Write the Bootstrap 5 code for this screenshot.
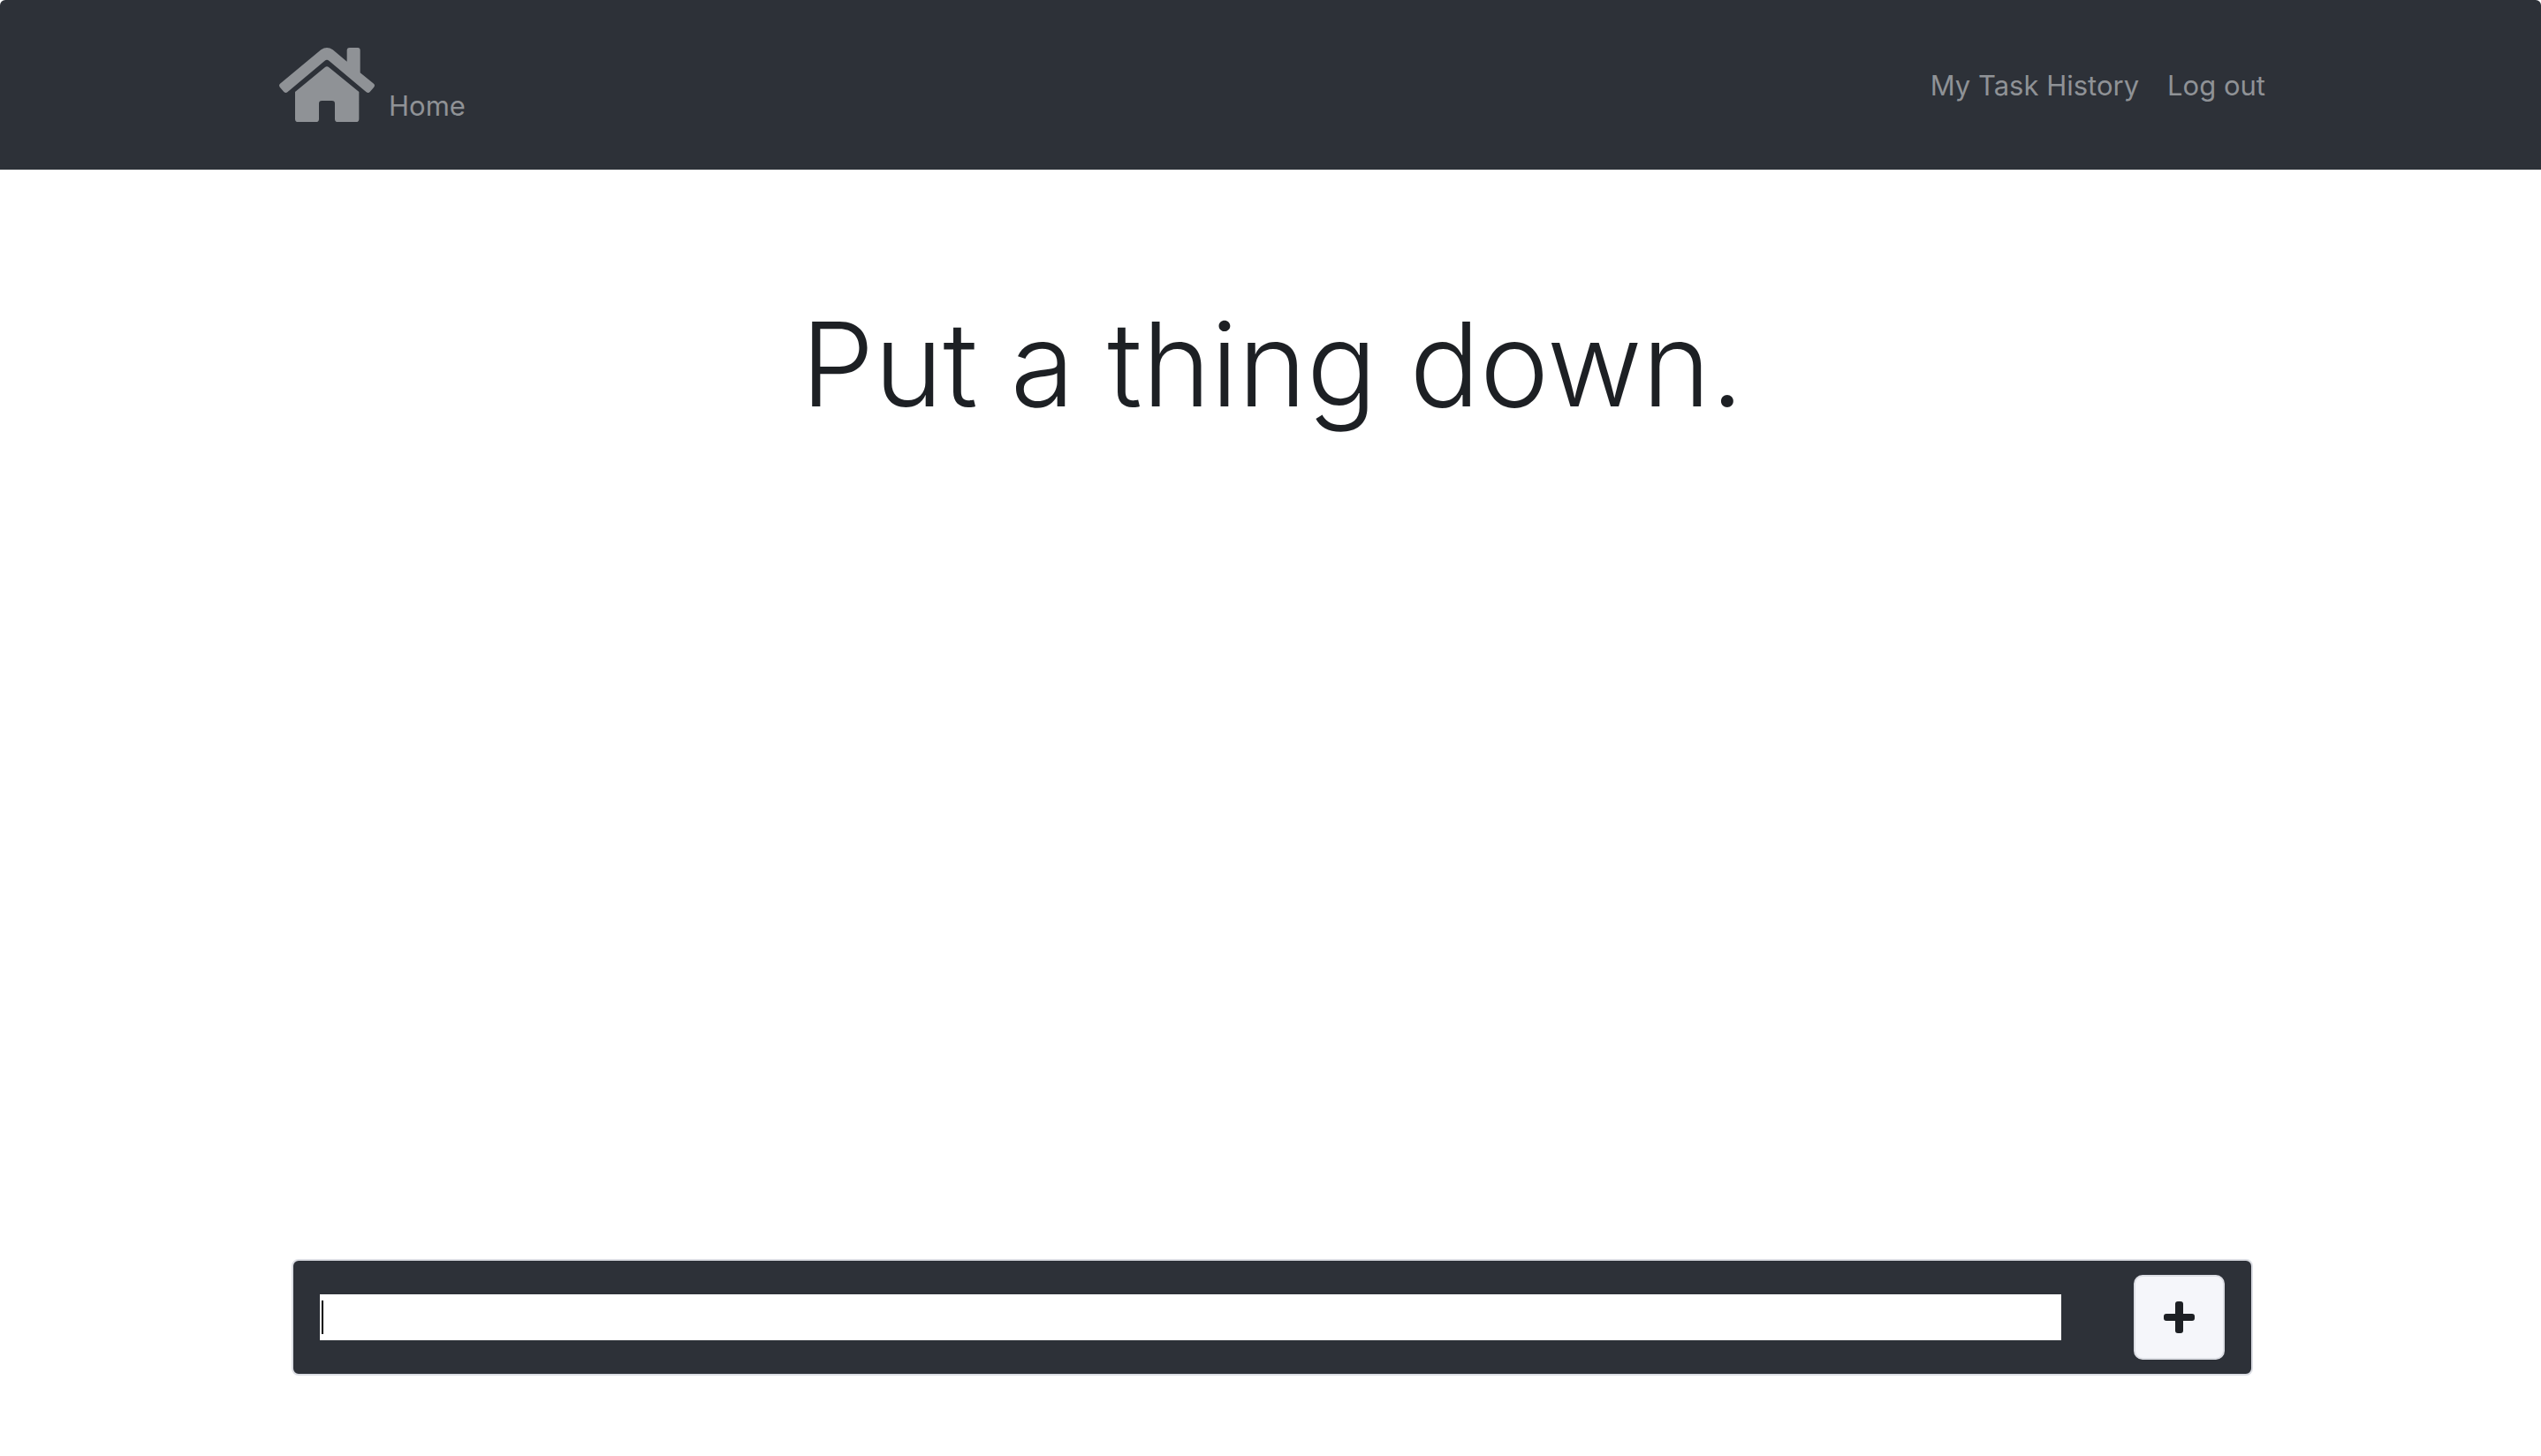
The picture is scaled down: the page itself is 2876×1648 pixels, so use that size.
<!DOCTYPE html>
<html lang="en">
<head>
<meta charset="utf-8">
<meta name="viewport" content="width=device-width, initial-scale=1">
<title>Put a thing down</title>
<link href="https://cdn.jsdelivr.net/npm/bootstrap@5.3.0/dist/css/bootstrap.min.css" rel="stylesheet">
<style>
  body { font-family: Inter, "Liberation Sans", sans-serif; font-size: 32px; line-height: 48px; background: #fff; color: #1d2024; }
  .page-width { max-width: 2280px; padding: 0 14px 0 18px; }
  .site-nav { background: #2d3138; height: 192px; border-radius: 6px 6px 0 0; --bs-navbar-padding-y: 0; }
  .site-nav a { color: #8f9296; text-decoration: none; font-size: 31px; }
  .site-nav a:hover { color: #c3c5c8; }
  .home-icon { width: 108px; height: 84px; }
  .home-link { gap: 16px; }
  .home-text { line-height: 36px; }
  .link-row { gap: 32px; padding-top: 2px; }
  .hero-title { font-size: 132px; line-height: 168px; font-weight: 350; margin-top: 136px; }
  .task-form { background: #2d3138; border: 2px solid #dcdee4; border-radius: 8px; height: 132px; margin: 0 14px 91px; padding: 0 30px; }
  .task-field { height: 52px; margin-right: 82px; }
  .task-field input { height: 52px; padding: 0 4px; border: 0; border-radius: 0; outline: 0; background: #fff; font-size: 32px; }
  .text-caret { left: 2px; top: 7px; width: 2px; height: 38px; background: #000; }
  .add-btn { width: 103px; height: 96px; border: 2px solid #dcdee4; border-radius: 10px; background: #f5f6fa; color: #1d2024; }
  .add-btn:hover { background: #e4e6ec; }
  .add-btn svg { width: 35px; height: 36px; }
</style>
<script src="https://cdn.jsdelivr.net/npm/bootstrap@5.3.0/dist/js/bootstrap.bundle.min.js" defer></script>
</head>
<body class="d-flex flex-column min-vh-100">
<nav class="navbar navbar-expand site-nav" aria-label="Main">
  <div class="container-fluid page-width">
    <a href="#" class="home-link d-flex align-items-end">
      <svg class="home-icon" viewBox="0 0 324 252" fill="currentColor" aria-hidden="true">
        <path d="M142 7Q162-7 182 7L230 47V9Q230 0 239 0H267Q275 0 275 9V85L321 122Q327 128 321 135L308 150Q303 156 296 151L169 44Q162 38 155 44L28 151Q22 156 16 150L3 135Q-3 128 3 122Z"/>
        <path d="M155 67Q162 61 169 67L271 150V242Q271 252 261 252H199Q189 252 189 242V190Q189 180 179 180H145Q135 180 135 190V242Q135 252 125 252H64Q54 252 54 242V150Z"/>
      </svg>
      <span class="home-text">Home</span>
    </a>
    <div class="link-row d-flex">
      <a href="#">My Task History</a>
      <a href="#">Log out</a>
    </div>
  </div>
</nav>
<main class="container-fluid page-width d-flex flex-column flex-grow-1">
  <h1 class="hero-title text-center mb-0">Put a thing down.</h1>
  <form class="task-form d-flex align-items-center mt-auto">
    <div class="task-field position-relative flex-grow-1">
      <input type="text" id="task" class="w-100 d-block" aria-label="New task">
      <span class="text-caret position-absolute"></span>
    </div>
    <button type="button" class="add-btn d-flex align-items-center justify-content-center p-0" aria-label="Add task">
      <svg viewBox="0 0 35 36" fill="currentColor" aria-hidden="true"><rect x="13" y="0" width="9" height="36" rx="3"/><rect x="0" y="14" width="35" height="8" rx="3"/></svg>
    </button>
  </form>
</main>
</body>
</html>
